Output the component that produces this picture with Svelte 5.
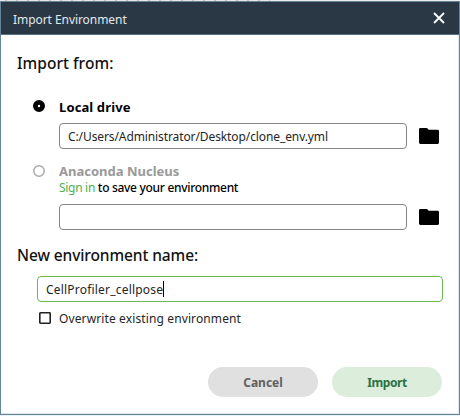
<script>
  let path = 'C:/Users/Administrator/Desktop/clone_env.yml';
  let name = 'CellProfiler_cellpose';
</script>

{#snippet folder()}
  <button class="folder" aria-label="Browse">
    <svg width="20" height="16" viewBox="0 0 20 16"><path d="M1.4 0H7.6Q8.4 0 9 1L9.6 1.8H18.6Q20 1.8 20 3.2V14.6Q20 16 18.6 16H1.4Q0 16 0 14.6V1.4Q0 0 1.4 0Z" /></svg>
  </button>
{/snippet}

<div class="window">
  <div class="behind"></div>
  <div class="dialog">
    <header>
      <span class="title">Import Environment</span>
      <svg class="close" width="12" height="12" viewBox="0 0 12 12"><path d="M1 1 11 11M11 1 1 11" /></svg>
    </header>
    <main>
      <h2 class="from">Import from:</h2>

      <div class="option first">
        <svg width="12" height="12" viewBox="0 0 12 12"><circle cx="6" cy="6" r="3.6" fill="none" stroke="#000" stroke-width="4.8" /></svg>
        <span class="local">Local drive</span>
      </div>
      <div class="field">
        <div class="input"><span class="path">{path}</span></div>
        {@render folder()}
      </div>

      <div class="option second">
        <svg width="12" height="12" viewBox="0 0 12 12"><circle cx="6" cy="6" r="5.2" fill="none" stroke="#aaa" stroke-width="1.5" /></svg>
        <span class="nucleus">Anaconda Nucleus</span>
      </div>
      <div class="hint"><span class="sign">Sign in</span> <span class="save">to save your environment</span></div>
      <div class="field next">
        <div class="input"></div>
        {@render folder()}
      </div>

      <h2 class="newname">New environment name:</h2>
      <div class="input active"><span class="env">{name}</span><i class="caret"></i></div>
      <div class="check">
        <svg width="12" height="12" viewBox="0 0 12 12"><rect x="0.8" y="0.8" width="10.4" height="10.4" rx="0.6" fill="none" stroke="#222" stroke-width="1.6" /></svg>
        <span class="over">Overwrite existing environment</span>
      </div>

      <footer>
        <button class="pill cancel"><span>Cancel</span></button>
        <button class="pill import"><span>Import</span></button>
      </footer>
    </main>
  </div>
</div>

<style>
  :global(body) { margin: 0; background: #e8f3f8; }
  * { box-sizing: border-box; }
  .window { width: 460px; height: 416px; overflow: hidden; font-family: 'Noto Sans', 'Open Sans', sans-serif; color: #111; }
  .behind { height: 1px; background: repeating-linear-gradient(90deg, #e9eae8 0 5px, #c4c6c5 5px 7px, #e5e6e4 7px 11px); background-size: 270px 1px; background-repeat: no-repeat; background-color: #eceeed; }
  .dialog { height: 414px; border: 1px solid #64849a; background: #fff; box-shadow: inset -1px -1px #e1e6e9; }
  header { height: 33px; padding: 0 13px 0 12px; display: flex; align-items: center; justify-content: space-between; background: #2a3846; border-bottom: 1px solid #587186; color: #e4e8eb; }
  .title { font-size: 12px; line-height: 16px; letter-spacing: -0.06px; padding-top: 3px; }
  .close { stroke: #fff; stroke-width: 1.8; fill: none; margin: 0 1px 1px 0; }
  main { display: flex; flex-direction: column; padding: 0 16px; }
  span, h2 { white-space: nowrap; }
  h2 { margin: 0; font-size: 15.5px; line-height: 22px; font-weight: 500; }
  .from { margin-top: 17px; letter-spacing: 0.04px; }
  .option { display: flex; align-items: center; gap: 14px; height: 18px; padding-left: 16px; font-size: 13px; line-height: 18px; font-weight: 700; }
  .option svg, .check svg { display: block; }
  .first { margin-top: 23px; }
  .local { color: #000; letter-spacing: 0.12px; padding-top: 2px; }
  .field { display: flex; align-items: center; margin: 8px 0 0 42px; }
  .input { display: flex; align-items: center; width: 348px; height: 26px; border: 1px solid #858585; border-radius: 4px; padding: 0 8px; font-size: 12px; line-height: 16px; color: #252525; }
  .path { letter-spacing: -0.1px; padding-top: 1px; }
  .folder { border: 0; padding: 0; background: none; margin-left: 12px; height: 16px; display: flex; }
  .second { margin-top: 13px; color: #999; }
  .hint { margin-left: 42px; height: 16px; font-size: 12px; line-height: 16px; color: #000; letter-spacing: -0.3px; }
  .sign { color: #4caf50; }
  .save { font-weight: 500; }
  .next { margin-top: 8px; }
  .newname { margin-top: 14px; letter-spacing: -0.1px; }
  .active { width: 406px; margin: 10px 0 0 20px; border-color: #68b84f; }
  .env { letter-spacing: 0.2px; padding-top: 1px; }
  .caret { width: 1px; height: 16px; background: #000; }
  .check { display: flex; align-items: center; gap: 8px; height: 16px; margin: 8px 0 0 22px; font-size: 12px; line-height: 16px; color: #252525; }
  .over { letter-spacing: 0.12px; padding-top: 2px; }
  footer { display: flex; justify-content: flex-end; gap: 14px; margin-top: 41px; padding-right: 1px; }
  .pill { width: 110px; height: 30px; border: 0; padding: 2px 0 0; border-radius: 15px; font: 700 12px/16px 'Noto Sans', 'Open Sans', sans-serif; }
  .cancel { background: #e0e0e0; color: #606060; }
  .import { background: #dceddc; color: #2b7142; letter-spacing: -0.4px; }
</style>
